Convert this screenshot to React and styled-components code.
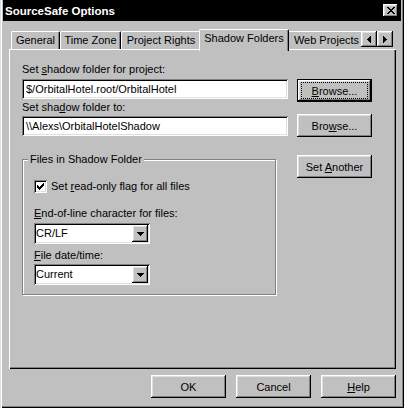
import React from 'react'
import styled, { createGlobalStyle, css } from 'styled-components'

const face = '#c0c0c0'

const GlobalStyle = createGlobalStyle`
  html, body {
    margin: 0;
    padding: 0;
    background: ${face};
  }
  body {
    font-family: 'Liberation Sans', Arial, sans-serif;
    font-size: 11px;
    color: #000;
  }
`

const raised = css`
  box-shadow: inset -1px -1px #000, inset 1px 1px #fff, inset -2px -2px #808080, inset 2px 2px #dfdfdf;
`

const sunken = css`
  box-shadow: inset 1px 1px #808080, inset -1px -1px #fff, inset 2px 2px #000, inset -2px -2px #dfdfdf;
`

const Window = styled.div`
  width: 404px;
  height: 408px;
  box-sizing: border-box;
  padding: 0 3px 3px 3px;
  background: ${face};
  box-shadow: inset 1px 0 #dfdfdf, inset 2px 0 #fff, inset -1px -1px #000, inset -2px -2px #808080;
  display: flex;
  flex-direction: column;
`

const TitleBar = styled.div`
  height: 21px;
  background: #000;
  color: #fff;
  display: flex;
  align-items: center;
  justify-content: space-between;
  padding: 0 3px 0 2px;
  font-weight: bold;
  font-size: 11.5px;
`

const CloseButton = styled.div`
  width: 15px;
  height: 13px;
  background: ${face};
  ${raised};
  display: flex;
  align-items: center;
  justify-content: center;
`

const Client = styled.div`
  display: flex;
  flex-direction: column;
  padding: 8px 0 0 6px;
`

const TabStrip = styled.div`
  display: flex;
  height: 22px;
  margin: 0 0 -2px 2px;
  position: relative;
  z-index: 1;
`

const TabViewport = styled.div`
  width: 350px;
  display: flex;
  align-items: flex-end;
  overflow: hidden;
`

const Tab = styled.div`
  flex: none;
  box-sizing: border-box;
  width: ${(p) => p.$width}px;
  height: 18px;
  margin-bottom: 2px;
  padding-top: 2px;
  line-height: 13px;
  text-align: center;
  white-space: nowrap;
  background: ${face};
  border-top: 1px solid #fff;
  border-left: 1px solid #fff;
  border-right: 1px solid #000;
  border-radius: 2px 2px 0 0;
  box-shadow: inset -1px 0 #808080;

  ${(p) =>
    p.$active &&
    css`
      height: 22px;
      margin: 0 -2px;
      position: relative;
      z-index: 1;
    `}
`

const ScrollArrows = styled.div`
  display: flex;
  margin-top: 2px;
`

const ArrowButton = styled.div`
  width: 16px;
  height: 16px;
  background: ${face};
  ${raised};
  display: flex;
  align-items: center;
  justify-content: center;
`

const Panel = styled.div`
  width: 387px;
  height: 320px;
  box-sizing: border-box;
  padding: 14px 0 0 13px;
  box-shadow: inset 1px 1px #fff, inset -1px -1px #000, inset -2px -2px #808080;
`

const TopGrid = styled.div`
  display: grid;
  grid-template-columns: 266px 75px;
  grid-template-rows: 16px 22px 13px 23px;
  column-gap: 9px;
  align-items: start;
`

const Label = styled.div`
  line-height: 13px;
  white-space: nowrap;
  margin-top: ${(p) => p.$top || 0}px;
`

const U = styled.span`
  text-decoration: underline;
`

const Field = styled.div`
  grid-column: 1;
  box-sizing: border-box;
  height: 20px;
  margin-top: ${(p) => p.$top || 0}px;
  padding: 0 4px;
  background: #fff;
  ${sunken};
  display: flex;
  align-items: center;
  white-space: nowrap;
`

const Button = styled.div`
  box-sizing: border-box;
  width: 75px;
  height: 23px;
  margin-top: ${(p) => p.$top || 0}px;
  background: ${face};
  ${raised};
  display: flex;
  align-items: center;
  justify-content: center;
  white-space: nowrap;

  ${(p) =>
    p.$default &&
    css`
      border: 1px solid #000;
      padding: 2px;
    `}
`

const FocusRect = styled.span`
  flex: 1;
  align-self: stretch;
  display: flex;
  align-items: center;
  justify-content: center;
  border: 1px dotted #000;
  margin: 0 1px;
`

const BottomRow = styled.div`
  display: flex;
  align-items: flex-start;
  margin-top: 16px;
`

const GroupBox = styled.fieldset`
  width: 254px;
  box-sizing: border-box;
  margin: 0 21px 0 0;
  padding: 0;
  min-inline-size: 0;
  border: 1px solid #808080;
  box-shadow: inset 1px 1px #fff, 1px 1px #fff;
`

const Legend = styled.legend`
  margin-left: 5px;
  padding: 0 2px;
  line-height: 13px;
  background: ${face};
`

const GroupBody = styled.div`
  padding: 14px 11px 9px 11px;
`

const CheckRow = styled.div`
  display: flex;
  align-items: center;
  gap: 4px;
  height: 13px;
  line-height: 13px;
`

const CheckBox = styled.div`
  width: 13px;
  height: 13px;
  background: #fff;
  ${sunken};
`

const Combo = styled.div`
  box-sizing: border-box;
  width: 116px;
  height: 21px;
  margin-top: ${(p) => p.$top || 0}px;
  padding: 2px;
  background: #fff;
  ${sunken};
  display: flex;
  align-items: center;
`

const ComboText = styled.span`
  flex: 1;
  line-height: 13px;
`

const DropButton = styled.div`
  width: 16px;
  align-self: stretch;
  background: ${face};
  ${raised};
  display: flex;
  align-items: center;
  justify-content: center;
`

const ButtonRow = styled.div`
  width: 387px;
  display: flex;
  justify-content: flex-end;
  gap: 10px;
  margin-top: 6px;
`

const CloseGlyph = () => (
  <svg width="8" height="7" viewBox="0 0 8 7">
    <path
      d="M0 0h2v1H0z M6 0h2v1H6z M1 1h2v1H1z M5 1h2v1H5z M2 2h4v1H2z M3 3h2v1H3z M2 4h4v1H2z M1 5h2v1H1z M5 5h2v1H5z M0 6h2v1H0z M6 6h2v1H6z"
      fill="#000"
    />
  </svg>
)

const DownGlyph = () => (
  <svg width="7" height="4" viewBox="0 0 7 4">
    <path d="M0 0h7v1H0z M1 1h5v1H1z M2 2h3v1H2z M3 3h1v1H3z" fill="#000" />
  </svg>
)

const LeftGlyph = () => (
  <svg width="4" height="7" viewBox="0 0 4 7">
    <path d="M3 0h1v7H3z M2 1h1v5H2z M1 2h1v3H1z M0 3h1v1H0z" fill="#000" />
  </svg>
)

const RightGlyph = () => (
  <svg width="4" height="7" viewBox="0 0 4 7">
    <path d="M0 0h1v7H0z M1 1h1v5H1z M2 2h1v3H2z M3 3h1v1H3z" fill="#000" />
  </svg>
)

const CheckGlyph = () => (
  <svg width="13" height="13" viewBox="0 0 13 13">
    <path
      d="M3 5h1v3H3z M4 6h1v3H4z M5 7h1v3H5z M6 6h1v3H6z M7 5h1v3H7z M8 4h1v3H8z M9 3h1v3H9z"
      fill="#000"
    />
  </svg>
)

const tabs = [
  { name: 'General', width: 49 },
  { name: 'Time Zone', width: 61 },
  { name: 'Project Rights', width: 80 },
  { name: 'Shadow Folders', width: 90, active: true },
  { name: 'Web Projects', width: 79 },
]

export default function App() {
  return (
    <>
      <GlobalStyle />
      <Window>
        <TitleBar>
          <span>SourceSafe Options</span>
          <CloseButton>
            <CloseGlyph />
          </CloseButton>
        </TitleBar>

        <Client>
          <TabStrip>
            <TabViewport>
              {tabs.map((t) => (
                <Tab key={t.name} $width={t.width} $active={t.active}>
                  {t.name}
                </Tab>
              ))}
            </TabViewport>
            <ScrollArrows>
              <ArrowButton>
                <LeftGlyph />
              </ArrowButton>
              <ArrowButton>
                <RightGlyph />
              </ArrowButton>
            </ScrollArrows>
          </TabStrip>

          <Panel>
            <TopGrid>
              <Label>
                Set <U>s</U>hadow folder for project:
              </Label>
              <span />
              <Field>$/OrbitalHotel.root/OrbitalHotel</Field>
              <Button $default>
                <FocusRect>
                  <span>
                    <U>B</U>rowse...
                  </span>
                </FocusRect>
              </Button>
              <Label>
                Set sha<U>d</U>ow folder to:
              </Label>
              <span />
              <Field $top={2}>{'\\\\Alexs\\OrbitalHotelShadow'}</Field>
              <Button>
                <span>
                  Bro<U>w</U>se...
                </span>
              </Button>
            </TopGrid>

            <BottomRow>
              <GroupBox>
                <Legend>Files in Shadow Folder</Legend>
                <GroupBody>
                  <CheckRow>
                    <CheckBox>
                      <CheckGlyph />
                    </CheckBox>
                    <span>
                      Set <U>r</U>ead-only flag for all files
                    </span>
                  </CheckRow>
                  <Label $top={14}>
                    <U>E</U>nd-of-line character for files:
                  </Label>
                  <Combo $top={3}>
                    <ComboText>CR/LF</ComboText>
                    <DropButton>
                      <DownGlyph />
                    </DropButton>
                  </Combo>
                  <Label $top={5}>
                    <U>F</U>ile date/time:
                  </Label>
                  <Combo $top={2}>
                    <ComboText>Current</ComboText>
                    <DropButton>
                      <DownGlyph />
                    </DropButton>
                  </Combo>
                </GroupBody>
              </GroupBox>
              <Button $top={2}>
                <span>
                  Set <U>A</U>nother
                </span>
              </Button>
            </BottomRow>
          </Panel>

          <ButtonRow>
            <Button>
              <span>OK</span>
            </Button>
            <Button>
              <span>Cancel</span>
            </Button>
            <Button>
              <span>
                <U>H</U>elp
              </span>
            </Button>
          </ButtonRow>
        </Client>
      </Window>
    </>
  )
}
